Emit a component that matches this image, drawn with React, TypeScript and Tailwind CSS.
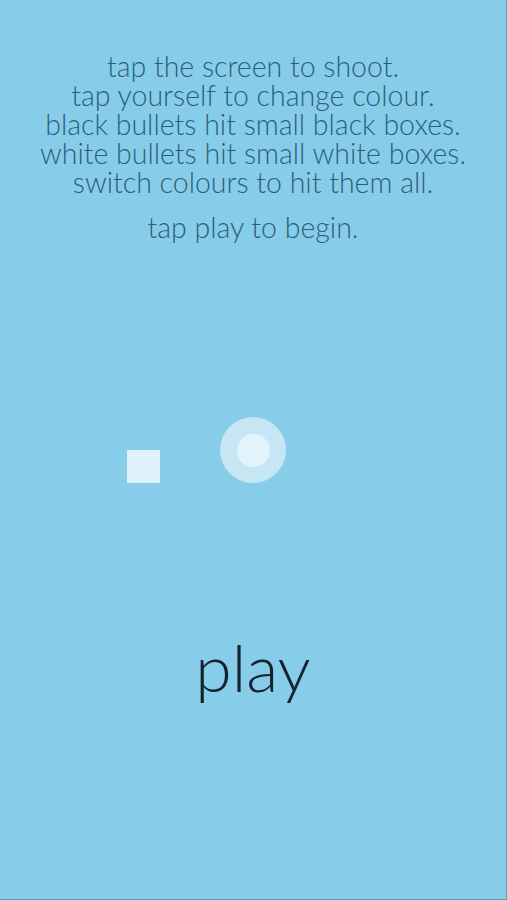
import React from "react";

export default function App() {
  return (
    <div
      className="w-[507px] h-[900px] bg-[#87cdea] overflow-hidden border-r border-b border-[#5f9bb5] flex flex-col"
      style={{ fontFamily: "Lato, 'Open Sans', sans-serif" }}
    >
      <div className="pt-[52px] flex flex-col items-center text-[#2c6079] font-light text-[28.5px] leading-[29px] text-center">
        <p>
          tap the screen to shoot.
          <br />
          tap yourself to change colour.
          <br />
          black bullets hit small black boxes.
          <br />
          white bullets hit small white boxes.
          <br />
          switch colours to hit them all.
        </p>
        <p className="mt-[16px]">tap play to begin.</p>
      </div>
      <div className="mt-[175px] pl-[127px] flex items-end gap-[60px]">
        <div className="w-[33px] h-[33px] bg-[#dff1fa]" />
        <div className="w-[66px] h-[66px] rounded-full bg-[#c6e6f4] flex items-center justify-center">
          <div className="w-[33px] h-[33px] rounded-full bg-[#e3f3fb]" />
        </div>
      </div>
      <div className="mt-[134px] text-center text-[66px] leading-[99px] font-light text-[#14232c]">
        play
      </div>
    </div>
  );
}
